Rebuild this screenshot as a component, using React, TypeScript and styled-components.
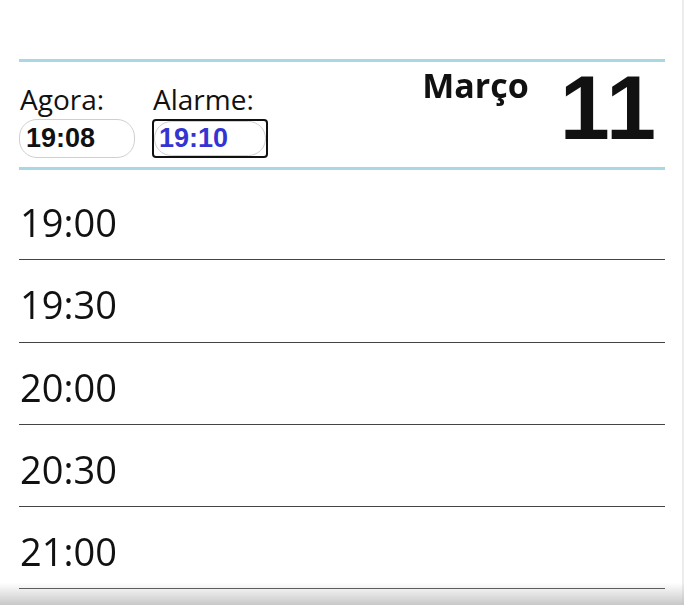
import { useState } from "react";
import styled, { createGlobalStyle } from "styled-components";

const GlobalStyle = createGlobalStyle`
  html, body {
    margin: 0;
    padding: 0;
    background: #ffffff;
    overflow: hidden;
  }
  body {
    font-family: "Open Sans", "Liberation Sans", sans-serif;
    color: #111;
  }
`;

const Page = styled.div`
  box-sizing: border-box;
  width: 684px;
  height: 605px;
  padding: 59px 17px 0 19px;
  border-right: 2px solid #ececec;
  overflow: hidden;
`;

const Header = styled.header`
  display: flex;
  justify-content: space-between;
  align-items: stretch;
  height: 105px;
  border-top: 3px solid #a8d8e3;
  border-bottom: 3px solid #a8d8e3;
`;

const Clocks = styled.div`
  display: flex;
  align-items: flex-end;
  gap: 17px;
  padding-bottom: 9px;
`;

const Field = styled.label`
  display: flex;
  flex-direction: column;
  gap: 2px;
`;

const FieldLabel = styled.span`
  font-size: 28px;
  line-height: 36px;
  padding-left: 1px;
`;

const TimeInput = styled.input<{ $alarm?: boolean }>`
  box-sizing: border-box;
  width: ${(p) => (p.$alarm ? 112 : 116)}px;
  height: ${(p) => (p.$alarm ? 35 : 39)}px;
  margin: 0;
  padding: 0 0 0 ${(p) => (p.$alarm ? 4 : 6)}px;
  border: 1px solid #cfcfcf;
  border-radius: 18px;
  font-family: "Liberation Sans", Arial, sans-serif;
  font-weight: bold;
  font-size: 27px;
  color: ${(p) => (p.$alarm ? "#3434d2" : "#111")};
  caret-color: #22228a;
  background: #fff;
  outline: none;
`;

const FocusRing = styled.span`
  display: inline-flex;
  border: 2px solid #111;
  border-radius: 4px;
  width: fit-content;
`;

const DateBox = styled.div`
  display: flex;
  align-items: flex-start;
  gap: 31px;
  padding-right: 8px;
`;

const Month = styled.span`
  margin-top: 6px;
  font-weight: bold;
  font-size: 34px;
  line-height: 34px;
`;

const Day = styled.span`
  font-family: "Liberation Sans", Arial, sans-serif;
  font-weight: bold;
  font-size: 90px;
  line-height: 92px;
  letter-spacing: 1px;
`;

const Slots = styled.ul`
  list-style: none;
  margin: 0;
  padding: 8px 0 0;
`;

const Slot = styled.li`
  padding: 18px 0 11.25px 1px;
  font-size: 38px;
  line-height: 52px;
  border-bottom: 1px solid #444;
`;

const BottomShade = styled.div`
  position: fixed;
  left: 0;
  right: 0;
  bottom: 0;
  height: 22px;
  pointer-events: none;
  background: linear-gradient(to bottom, rgba(190, 190, 190, 0), rgba(190, 190, 190, 0.85));
`;

const slots = ["19:00", "19:30", "20:00", "20:30", "21:00"];

export default function App() {
  const [now] = useState("19:08");
  const [alarm, setAlarm] = useState("19:10");

  return (
    <>
      <GlobalStyle />
      <Page>
        <Header>
          <Clocks>
            <Field>
              <FieldLabel>Agora:</FieldLabel>
              <TimeInput value={now} readOnly />
            </Field>
            <Field>
              <FieldLabel>Alarme:</FieldLabel>
              <FocusRing>
                <TimeInput
                  $alarm
                  autoFocus
                  value={alarm}
                  onChange={(e) => setAlarm(e.target.value)}
                />
              </FocusRing>
            </Field>
          </Clocks>
          <DateBox>
            <Month>Março</Month>
            <Day>11</Day>
          </DateBox>
        </Header>
        <Slots>
          {slots.map((s) => (
            <Slot key={s}>{s}</Slot>
          ))}
        </Slots>
      </Page>
      <BottomShade />
    </>
  );
}
